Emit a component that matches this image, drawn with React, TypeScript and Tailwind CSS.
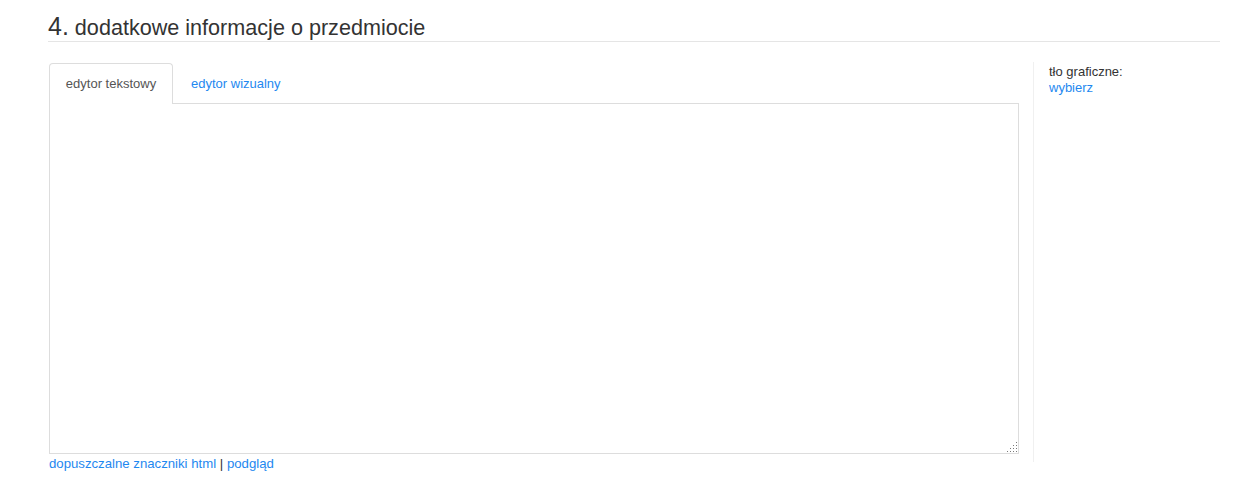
import React, { useState } from 'react';

// Uchwyt zmiany rozmiaru pola tekstowego (kropki ułożone w trójkąt)
const ResizeGrip: React.FC = () => {
    const dots: { x: number; y: number }[] = [];
    for (let row = 0; row < 4; row++) {
        for (let col = 3 - row; col < 4; col++) {
            dots.push({ x: col * 3, y: row * 3 });
        }
    }
    return (
        <svg className="absolute right-[2px] bottom-[2px] pointer-events-none" width="10" height="10" viewBox="0 0 10 10">
            {dots.map((d, i) => (
                <rect key={i} x={d.x} y={d.y} width="1" height="1" fill="#7a7a7a" />
            ))}
        </svg>
    );
};

// Sekcja formularza: dodatkowe informacje o przedmiocie
const App: React.FC = () => {
    const [tab, setTab] = useState<'text' | 'visual'>('text');

    const tabClass = (active: boolean) =>
        `rounded-t-[4px] border border-b-0 relative -mb-px z-10 ${active ? 'border-[#ddd] text-[#555] bg-white' : 'border-transparent text-[#1e88f0]'}`;

    return (
        <div className="min-h-[499px] bg-white pl-[48px] pr-[32px] font-['Liberation_Sans',Arial,sans-serif] text-[13px] text-[#333]">
            {/* Nagłówek sekcji */}
            <h2 className="h-[42px] pt-[13px] border-b border-[#e5e5e5] leading-[26px] text-[#333] overflow-visible">
                <span className="text-[25px]">4.</span>
                <span className="text-[21.6px]"> dodatkowe informacje o przedmiocie</span>
            </h2>

            <div className="flex mt-[20px]">
                {/* Edytor */}
                <div className="w-[971px] pl-[1px] pt-[1px]">
                    <div className="flex h-[40px]">
                        <button onClick={() => setTab('text')} className={`px-[15px] w-[124px] ${tabClass(tab === 'text')}`}>
                            edytor tekstowy
                        </button>
                        <button onClick={() => setTab('visual')} className={`px-[17px] ${tabClass(tab === 'visual')}`}>
                            edytor wizualny
                        </button>
                    </div>
                    <div className="relative w-[970px]">
                        <textarea className="block w-[970px] h-[351px] border border-[#ddd] outline-none p-2 text-[13px] resize-none" />
                        <ResizeGrip />
                    </div>
                    <div className="pt-[1px] leading-[17px] text-[13.2px]">
                        <a href="#" className="text-[#1e88f0]">dopuszczalne znaczniki html</a>
                        <span className="text-[#333]"> | </span>
                        <a href="#" className="text-[#1e88f0]">podgląd</a>
                    </div>
                </div>

                {/* Panel boczny */}
                <div className="ml-[14px] h-[400px] border-l border-[#f0f0f0] pl-[15px] pt-[2px] leading-[16px]">
                    <div className="text-[#333]">tło graficzne:</div>
                    <a href="#" className="text-[#1e88f0]">wybierz</a>
                </div>
            </div>
        </div>
    );
};

export default App;
